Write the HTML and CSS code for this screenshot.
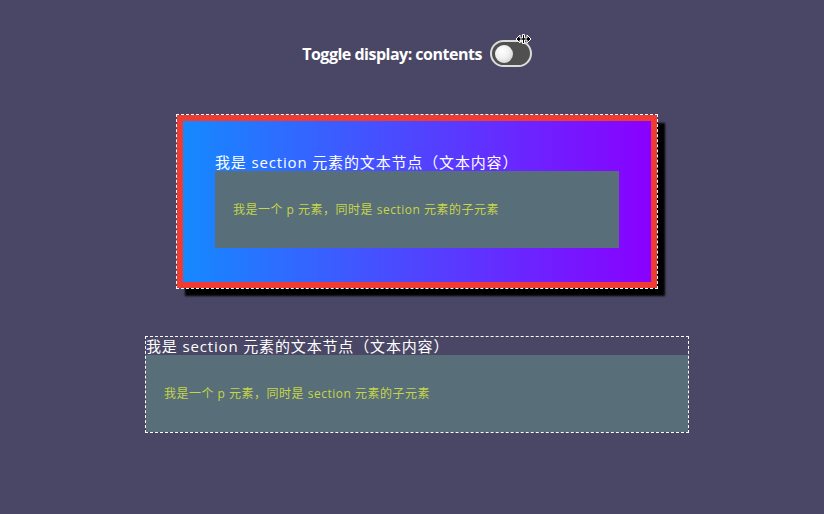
FILE: index.html
```html
<!DOCTYPE html>
<html lang="zh-CN">
<head>
<meta charset="utf-8">
<title>display: contents</title>
<link rel="stylesheet" href="styles.css">
</head>
<body>
<main class="page">
  <header class="toolbar">
    <span class="label">Toggle display: contents</span>
    <span class="switch">
      <span class="knob"></span>
      <svg class="cursor" width="17" height="12" viewBox="0 0 17 12" aria-hidden="true">
        <path d="M1 6 L5 2 V5 H7.5 V1.5 H9.5 V5 H12 V2 L16 6 L12 10 V7 H9.5 V10.5 H7.5 V7 H5 V10 Z" fill="#000" stroke="#fff" stroke-width="1" stroke-linejoin="round"/>
      </svg>
    </span>
  </header>

  <div class="demo demo--box">
    <section class="box">我是 section 元素的文本节点（文本内容）<p class="child">我是一个 p 元素，同时是 section 元素的子元素</p></section>
  </div>

  <div class="demo demo--contents">
    <section class="box contents">我是 section 元素的文本节点（文本内容）<p class="child">我是一个 p 元素，同时是 section 元素的子元素</p></section>
  </div>
</main>
</body>
</html>
```

FILE: styles.css
```css
html, body {
  margin: 0;
  padding: 0;
}

body {
  background: #4a4766;
  color: #fff;
  font-family: "Open Sans", "Noto Sans CJK SC", sans-serif;
}

.page {
  display: flex;
  flex-direction: column;
  align-items: center;
  box-sizing: border-box;
  height: 514px;
  padding: 40px 0 0 10px;
}

.toolbar {
  display: flex;
  align-items: center;
  gap: 8px;
  height: 27px;
}

.label {
  font-weight: 700;
  font-size: 16px;
  letter-spacing: -0.5px;
}

.switch {
  position: relative;
  display: flex;
  align-items: center;
  box-sizing: border-box;
  width: 42px;
  height: 27px;
  padding-left: 3px;
  border: 2px solid #dcdcdc;
  border-radius: 14px;
  background: #505050;
}

.knob {
  width: 18px;
  height: 18px;
  border-radius: 50%;
  background: radial-gradient(circle at 40% 35%, #ffffff 0%, #f0f0f0 45%, #c4c4c4 100%);
}

.cursor {
  position: absolute;
  left: 23px;
  top: -9px;
}

.demo {
  outline: 1px dashed #fff;
  font-size: 15px;
  line-height: 18px;
  letter-spacing: 0.85px;
}

.demo--box {
  margin-top: 48px;
}

.box {
  width: 480px;
  box-sizing: border-box;
  border: 6px solid #f03b32;
  padding: 32px 32px 34px;
  background: linear-gradient(90deg, #1589ff 0%, #8a00ff 100%);
  box-shadow: 8px 8px 2px #000;
}

.child {
  margin: 0;
  padding: 30px 18px;
  background: #586e78;
  color: #c6d64a;
  font-size: 12px;
  line-height: 17px;
  letter-spacing: 0.5px;
}

.demo--contents {
  width: 542px;
  margin-top: 49px;
}

.contents {
  display: contents;
}
```
